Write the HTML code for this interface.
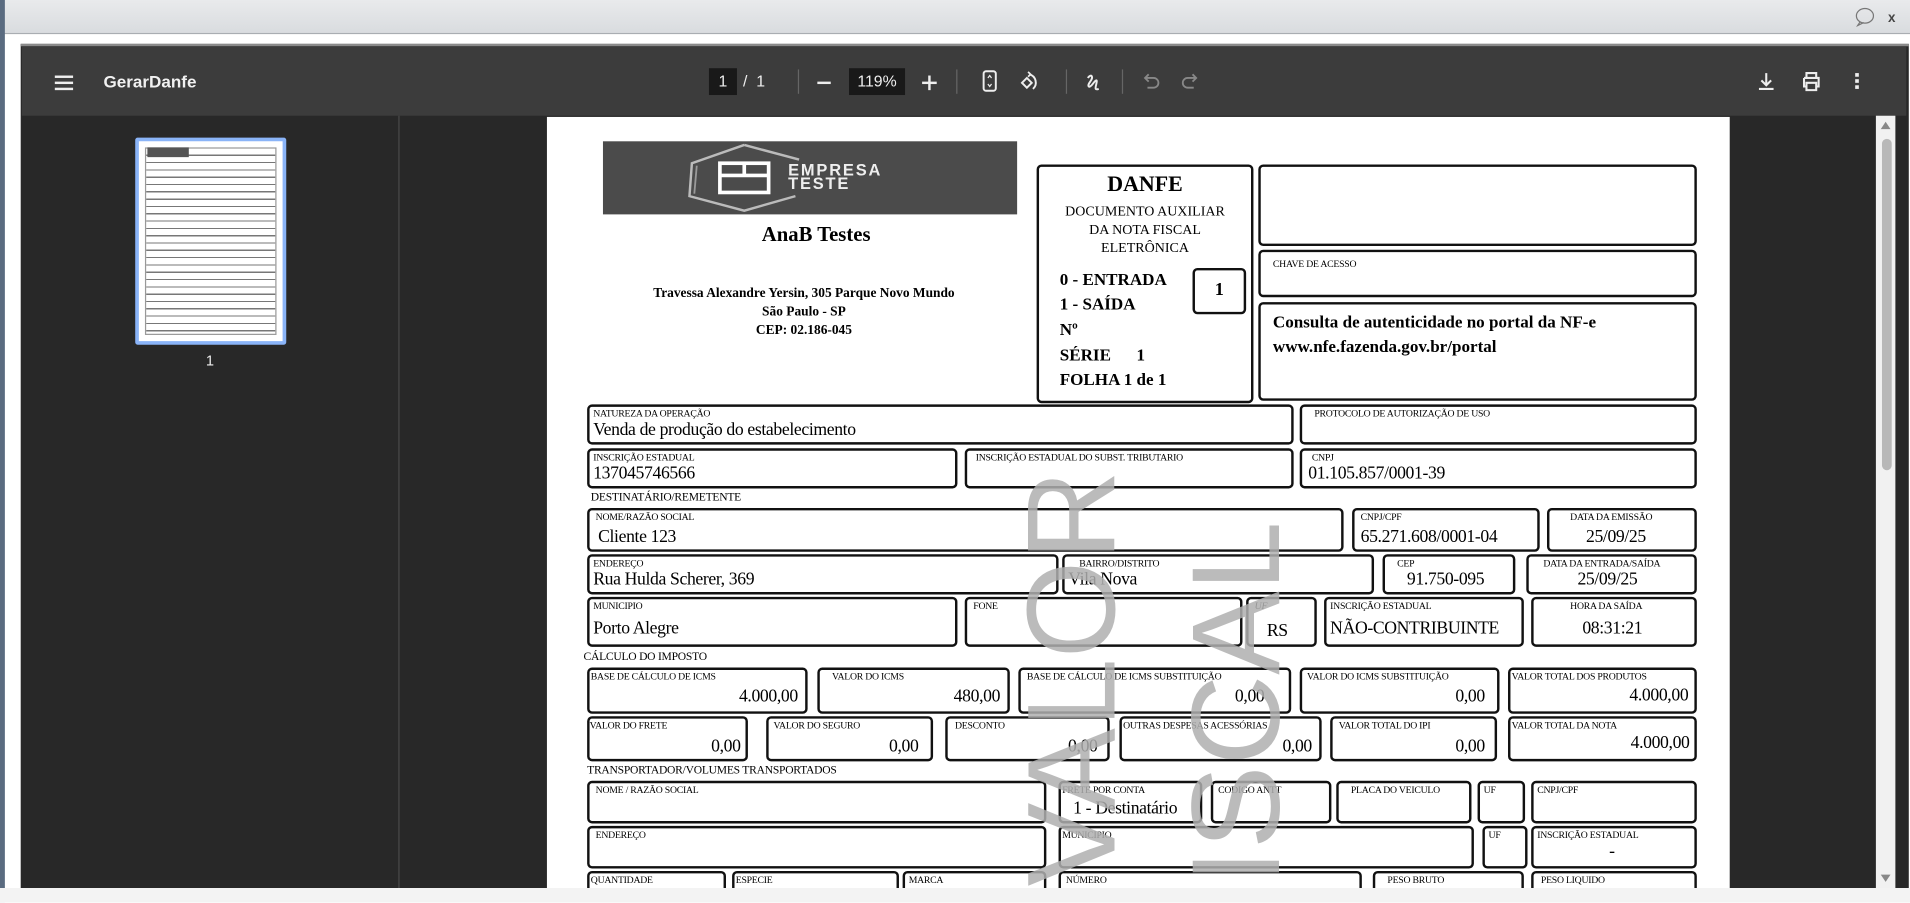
<!DOCTYPE html>
<html><head><meta charset="utf-8"><style>
*{margin:0;padding:0;box-sizing:border-box}
html,body{width:1910px;height:902px;overflow:hidden;background:#fff}
#r{position:absolute;left:0;top:0;width:1568px;height:741px;transform:scale(1.21811);transform-origin:0 0;font-family:"Liberation Sans",sans-serif;overflow:hidden}
.a{position:absolute}
.b{position:absolute;border:2px solid #111;border-radius:4px;font-family:"Liberation Serif",serif;color:#000;overflow:hidden}
.l{position:absolute;left:3px;top:1px;font-size:8px;white-space:nowrap;letter-spacing:-.2px}
.v{position:absolute;font-size:14.5px;white-space:nowrap;letter-spacing:-.3px}
.s{position:absolute;font-family:"Liberation Serif",serif;font-size:9.5px;white-space:nowrap;letter-spacing:-.2px}
.sep{position:absolute;top:57px;width:1px;height:20px;background:#666}
.t{font-family:"Liberation Serif",serif;font-weight:bold;color:#000;position:absolute;white-space:nowrap}
.wm{position:absolute;left:0;top:0;transform:rotate(-90deg);transform-origin:0 0;font-family:'Liberation Sans',sans-serif;font-size:103px;line-height:80px;color:rgba(175,175,175,.85);white-space:nowrap;direction:rtl;width:0}
</style></head><body><div id="r">
<div class="a" style="left:0;top:0;width:1568px;height:28px;background:linear-gradient(#e9eaec,#d9dcdf);border-bottom:1px solid #a9adb2"></div>
<div class="a" style="left:0;top:0;width:4px;height:741px;background:#5a6b80"></div>
<svg class="a" style="left:1522px;top:6px" width="40" height="16"><ellipse cx="9" cy="7" rx="7" ry="6" fill="none" stroke="#777" stroke-width="1"/><path d="M5 12 L3 15 L8 12.5" fill="none" stroke="#777"/><text x="28" y="12" font-size="11" font-weight="bold" fill="#444" font-family="Liberation Sans">x</text></svg>
<div class="a" style="left:17px;top:36px;width:1550px;height:693px;background:#282828;border-top:2px solid #8a8a8a"></div>
<div class="a" style="left:18px;top:38px;width:1547px;height:57px;background:#3c3c3c"></div>
<div class="a" style="left:45px;top:62px;width:15px;height:2px;background:#eee;box-shadow:0 5px 0 #eee,0 10px 0 #eee"></div>
<div class="a" style="left:85px;top:59px;color:#f1f1f1;font-size:14px;font-weight:bold">GerarDanfe</div>
<div class="a" style="left:582px;top:56px;width:23px;height:22px;background:#191919;color:#eee;font-size:13px;text-align:center;line-height:22px">1</div>
<div class="a" style="left:610px;top:59px;color:#eee;font-size:13px">/&nbsp;&nbsp;1</div>
<div class="sep" style="left:655px"></div>
<div class="a" style="left:671px;top:67px;width:11px;height:2px;background:#eee"></div>
<div class="a" style="left:697px;top:56px;width:46px;height:22px;background:#191919;color:#eee;font-size:13px;text-align:center;line-height:22px">119%</div>
<div class="a" style="left:757px;top:67px;width:12px;height:2px;background:#eee"></div><div class="a" style="left:762px;top:62px;width:2px;height:12px;background:#eee"></div>
<div class="sep" style="left:785px"></div>
<svg class="a" style="left:806px;top:57px" width="14" height="20"><rect x="1.5" y="1.5" width="10" height="16" rx="2" fill="none" stroke="#eee" stroke-width="1.6"/><path d="M5 7l1.5-2 1.5 2M5 12l1.5 2 1.5-2" fill="none" stroke="#eee"/></svg>
<svg class="a" style="left:836px;top:57px" width="20" height="20"><path d="M3 11l4-4 4 4-4 4z" fill="none" stroke="#eee" stroke-width="1.6"/><path d="M9 4a7 7 0 0 1 3 12" fill="none" stroke="#eee" stroke-width="1.6"/><path d="M8 2l2 2-2 2" fill="none" stroke="#eee" stroke-width="1.4"/></svg>
<div class="sep" style="left:875px"></div>
<svg class="a" style="left:890px;top:58px" width="18" height="18"><path d="M3 6c3-4 5-1 2 3s-1 6 2 2 4-4 3 0-1 5 2 4" fill="none" stroke="#eee" stroke-width="1.6"/></svg>
<div class="sep" style="left:921px"></div>
<svg class="a" style="left:937px;top:59px" width="16" height="16"><path d="M4 5h6a4 4 0 0 1 0 8H5M6 2L3 5l3 3" fill="none" stroke="#888" stroke-width="1.5"/></svg>
<svg class="a" style="left:969px;top:59px" width="16" height="16"><path d="M12 5H6a4 4 0 0 0 0 8h5M10 2l3 3-3 3" fill="none" stroke="#888" stroke-width="1.5"/></svg>
<svg class="a" style="left:1442px;top:58px" width="16" height="18"><path d="M8 2v10M4 8l4 4 4-4M2 15h12" fill="none" stroke="#eee" stroke-width="1.7"/></svg>
<svg class="a" style="left:1478px;top:58px" width="18" height="18"><path d="M5 6V2h8v4M3 6h12v7h-2M5 13H3V6M5 10h8v6H5z" fill="none" stroke="#eee" stroke-width="1.7"/></svg>
<div class="a" style="left:1523px;top:60px;width:3px;height:3px;background:#eee;box-shadow:0 5px 0 #eee,0 10px 0 #eee"></div>
<div class="a" style="left:327px;top:95px;width:1px;height:634px;background:#4a4a4a"></div>
<div class="a" style="left:111px;top:113px;width:124px;height:170px;border:3px solid #8ab4f8;background:#fff;border-radius:2px">
<div class="a" style="left:5px;top:5px;width:108px;height:154px;border:1px solid #999;background:repeating-linear-gradient(#fff 0 5px,#777 5px 6px)"></div>
<div class="a" style="left:7px;top:5px;width:34px;height:8px;background:#555"></div>
</div>
<div class="a" style="left:169px;top:289px;color:#eee;font-size:12px">1</div>
<div class="a" style="left:1540px;top:95px;width:16px;height:634px;background:#f1f1f1"></div>
<div class="a" style="left:1545px;top:114px;width:8px;height:272px;background:#b8b8b8;border-radius:4px"></div>
<div class="a" style="left:1544px;top:100px;border:4px solid transparent;border-bottom:6px solid #888;border-top:0"></div>
<div class="a" style="left:1544px;top:718px;border:4px solid transparent;border-top:6px solid #888;border-bottom:0"></div>
<div class="a" style="left:0;top:729px;width:1568px;height:12px;background:#f3f3f3"></div>
<div class="a" style="left:449px;top:96px;width:971px;height:633px;background:#fff;overflow:hidden">
<div style="position:absolute;left:-449px;top:-96px;width:1568px;height:741px">
<div class="a" style="left:495px;top:116px;width:340px;height:60px;background:#4b4b4b"></div>
<svg class="a" style="left:560px;top:117px" width="200" height="58"><path d="M51 2L96 14M51 2L8 17 6 44 51 56 93 44" fill="none" stroke="#bbb" stroke-width="2"/><path d="M12 19L10 42" stroke="#999" stroke-width="1.5"/><rect x="31" y="17" width="40" height="24" fill="none" stroke="#fff" stroke-width="3"/><path d="M31 27h40M51 17v11" stroke="#fff" stroke-width="3"/><text x="87" y="27" font-family="Liberation Sans" font-weight="bold" font-size="13.5" fill="#eee" letter-spacing="1.5">EMPRESA</text><text x="87" y="38" font-family="Liberation Sans" font-weight="bold" font-size="13.5" fill="#eee" letter-spacing="1.5">TESTE</text></svg>
<div class="t" style="left:560px;top:183px;width:220px;text-align:center;font-size:17px">AnaB Testes</div>
<div class="t" style="left:500px;top:234px;width:320px;text-align:center;font-size:11px;line-height:15px">Travessa Alexandre Yersin, 305 Parque Novo Mundo<br>São Paulo - SP<br>CEP: 02.186-045</div>
<div class="b" style="left:851px;top:135px;width:178px;height:196px">
<div class="t" style="left:0;top:4px;width:174px;text-align:center;font-size:18px">DANFE</div>
<div class="a" style="left:0;top:30px;width:174px;text-align:center;font-size:11.5px;line-height:15px">DOCUMENTO AUXILIAR<br>DA NOTA FISCAL<br>ELETRÔNICA</div>
<div class="t" style="left:17px;top:84px;font-size:14px;line-height:20px">0 - ENTRADA<br>1 - SAÍDA</div>
<div class="t" style="left:17px;top:127px;font-size:14px">Nº</div>
<div class="t" style="left:17px;top:148px;font-size:14px">SÉRIE&nbsp;&nbsp;&nbsp;&nbsp;&nbsp;&nbsp;1</div>
<div class="t" style="left:17px;top:168px;font-size:14px">FOLHA 1 de 1</div>
</div>
<div class="b" style="left:979px;top:220px;width:44px;height:38px"><div class="t" style="left:0;top:8px;width:40px;text-align:center;font-size:15px">1</div></div>
<div class="b" style="left:1033px;top:135px;width:360px;height:67px"></div>
<div class="b" style="left:1033px;top:205px;width:360px;height:39px"><div class="l" style="left:10px;top:5px">CHAVE DE ACESSO</div></div>
<div class="b" style="left:1033px;top:248px;width:360px;height:81px"><div class="t" style="left:10px;top:6px;font-size:14px;line-height:20px">Consulta de autenticidade no portal da NF-e<br>www.nfe.fazenda.gov.br/portal</div></div>

<div class="b" style="left:482px;top:332px;width:580px;height:33px"><div class="l">NATUREZA DA OPERAÇÃO</div><div class="v" style="left:3px;top:11px">Venda de produção do estabelecimento</div></div>
<div class="b" style="left:1067px;top:332px;width:326px;height:33px"><div class="l" style="left:10px">PROTOCOLO DE AUTORIZAÇÃO DE USO</div></div>
<div class="b" style="left:482px;top:368px;width:304px;height:33px"><div class="l">INSCRIÇÃO ESTADUAL</div><div class="v" style="left:3px;top:11px">137045746566</div></div>
<div class="b" style="left:792px;top:368px;width:270px;height:33px"><div class="l" style="left:7px">INSCRIÇÃO ESTADUAL DO SUBST. TRIBUTARIO</div></div>
<div class="b" style="left:1067px;top:368px;width:326px;height:33px"><div class="l" style="left:8px">CNPJ</div><div class="v" style="left:5px;top:11px">01.105.857/0001-39</div></div>
<div class="s" style="left:485px;top:404px">DESTINATÁRIO/REMETENTE</div>
<div class="b" style="left:482px;top:417px;width:621px;height:36px"><div class="l" style="left:5px">NOME/RAZÃO SOCIAL</div><div class="v" style="left:7px;top:14px">Cliente 123</div></div>
<div class="b" style="left:1110px;top:417px;width:154px;height:36px"><div class="l" style="left:5px">CNPJ/CPF</div><div class="v" style="left:5px;top:14px">65.271.608/0001-04</div></div>
<div class="b" style="left:1270px;top:417px;width:123px;height:36px"><div class="l" style="left:17px">DATA DA EMISSÃO</div><div class="v" style="left:30px;top:14px">25/09/25</div></div>
<div class="b" style="left:482px;top:455px;width:387px;height:33px"><div class="l">ENDEREÇO</div><div class="v" style="left:3px;top:11px">Rua Hulda Scherer, 369</div></div>
<div class="b" style="left:872px;top:455px;width:256px;height:33px"><div class="l" style="left:12px">BAIRRO/DISTRITO</div><div class="v" style="left:3px;top:11px">Vila Nova</div></div>
<div class="b" style="left:1135px;top:455px;width:109px;height:33px"><div class="l" style="left:10px">CEP</div><div class="v" style="left:18px;top:11px">91.750-095</div></div>
<div class="b" style="left:1253px;top:455px;width:140px;height:33px"><div class="l" style="left:12px">DATA DA ENTRADA/SAÍDA</div><div class="v" style="left:40px;top:11px">25/09/25</div></div>
<div class="b" style="left:482px;top:490px;width:304px;height:41px"><div class="l">MUNICIPIO</div><div class="v" style="left:3px;top:16px">Porto Alegre</div></div>
<div class="b" style="left:792px;top:490px;width:228px;height:41px"><div class="l" style="left:5px">FONE</div></div>
<div class="b" style="left:1023px;top:490px;width:58px;height:41px"><div class="l" style="left:5px;font-style:italic">UF</div><div class="v" style="left:15px;top:18px">RS</div></div>
<div class="b" style="left:1087px;top:490px;width:164px;height:41px"><div class="l">INSCRIÇÃO ESTADUAL</div><div class="v" style="left:3px;top:16px">NÃO-CONTRIBUINTE</div></div>
<div class="b" style="left:1257px;top:490px;width:136px;height:41px"><div class="l" style="left:30px">HORA DA SAÍDA</div><div class="v" style="left:40px;top:16px">08:31:21</div></div>
<div class="s" style="left:479px;top:535px">CÁLCULO DO IMPOSTO</div>
<div class="b" style="left:482px;top:548px;width:181px;height:38px"><div class="l" style="left:1px">BASE DE CÁLCULO DE ICMS</div><div class="v" style="right:6px;top:14px">4.000,00</div></div>
<div class="b" style="left:671px;top:548px;width:158px;height:38px"><div class="l" style="left:10px">VALOR DO ICMS</div><div class="v" style="right:6px;top:14px">480,00</div></div>
<div class="b" style="left:836px;top:548px;width:224px;height:38px"><div class="l" style="left:5px">BASE DE CÁLCULO DE ICMS SUBSTITUIÇÃO</div><div class="v" style="right:20px;top:14px">0,00</div></div>
<div class="b" style="left:1067px;top:548px;width:164px;height:38px"><div class="l" style="left:4px">VALOR DO ICMS SUBSTITUIÇÃO</div><div class="v" style="right:10px;top:14px">0,00</div></div>
<div class="b" style="left:1238px;top:548px;width:155px;height:38px"><div class="l" style="left:1px">VALOR TOTAL DOS PRODUTOS</div><div class="v" style="right:5px;top:13px">4.000,00</div></div>
<div class="b" style="left:482px;top:588px;width:132px;height:37px"><div class="l" style="left:0">VALOR DO FRETE</div><div class="v" style="right:4px;top:15px">0,00</div></div>
<div class="b" style="left:629px;top:588px;width:137px;height:37px"><div class="l" style="left:4px">VALOR DO SEGURO</div><div class="v" style="right:10px;top:15px">0,00</div></div>
<div class="b" style="left:776px;top:588px;width:135px;height:37px"><div class="l" style="left:6px">DESCONTO</div><div class="v" style="right:8px;top:15px">0,00</div></div>
<div class="b" style="left:919px;top:588px;width:166px;height:37px"><div class="l" style="left:1px">OUTRAS DESPESAS ACESSÓRIAS</div><div class="v" style="right:6px;top:15px">0,00</div></div>
<div class="b" style="left:1092px;top:588px;width:137px;height:37px"><div class="l" style="left:5px">VALOR TOTAL DO IPI</div><div class="v" style="right:8px;top:15px">0,00</div></div>
<div class="b" style="left:1238px;top:588px;width:155px;height:37px"><div class="l" style="left:1px">VALOR TOTAL DA NOTA</div><div class="v" style="right:4px;top:12px">4.000,00</div></div>
<div class="s" style="left:482px;top:628px">TRANSPORTADOR/VOLUMES TRANSPORTADOS</div>
<div class="b" style="left:482px;top:641px;width:377px;height:35px"><div class="l" style="left:5px">NOME / RAZÃO SOCIAL</div></div>
<div class="b" style="left:869px;top:641px;width:118px;height:35px"><div class="l" style="left:1px">FRETE POR CONTA</div><div class="v" style="left:10px;top:13px">1 - Destinatário</div></div>
<div class="b" style="left:994px;top:641px;width:99px;height:35px"><div class="l" style="left:4px">CODIGO ANTT</div></div>
<div class="b" style="left:1097px;top:641px;width:111px;height:35px"><div class="l" style="left:10px">PLACA DO VEICULO</div></div>
<div class="b" style="left:1213px;top:641px;width:39px;height:35px"><div class="l" style="left:3px">UF</div></div>
<div class="b" style="left:1257px;top:641px;width:136px;height:35px"><div class="l" style="left:3px">CNPJ/CPF</div></div>
<div class="b" style="left:482px;top:678px;width:377px;height:35px"><div class="l" style="left:5px">ENDEREÇO</div></div>
<div class="b" style="left:869px;top:678px;width:341px;height:35px"><div class="l" style="left:1px">MUNICIPIO</div></div>
<div class="b" style="left:1217px;top:678px;width:37px;height:35px"><div class="l" style="left:3px">UF</div></div>
<div class="b" style="left:1257px;top:678px;width:136px;height:35px"><div class="l" style="left:3px">INSCRIÇÃO ESTADUAL</div><div class="v" style="left:62px;top:11px">-</div></div>
<div class="b" style="left:482px;top:715px;width:114px;height:30px"><div class="l" style="left:1px">QUANTIDADE</div></div>
<div class="b" style="left:601px;top:715px;width:137px;height:30px"><div class="l" style="left:1px">ESPECIE</div></div>
<div class="b" style="left:741px;top:715px;width:118px;height:30px"><div class="l" style="left:3px">MARCA</div></div>
<div class="b" style="left:869px;top:715px;width:249px;height:30px"><div class="l" style="left:4px">NÚMERO</div></div>
<div class="b" style="left:1127px;top:715px;width:124px;height:30px"><div class="l" style="left:10px">PESO BRUTO</div></div>
<div class="b" style="left:1257px;top:715px;width:136px;height:30px"><div class="l" style="left:6px">PESO LIQUIDO</div></div>
<div class="a" style="left:840px;top:386px;width:80px;height:0;overflow:visible"><div class="wm">SEM VALOR</div></div>
<div class="a" style="left:975px;top:428px;width:80px;height:0;overflow:visible"><div class="wm">FISCAL</div></div>
</div></div>
</div></body></html>
